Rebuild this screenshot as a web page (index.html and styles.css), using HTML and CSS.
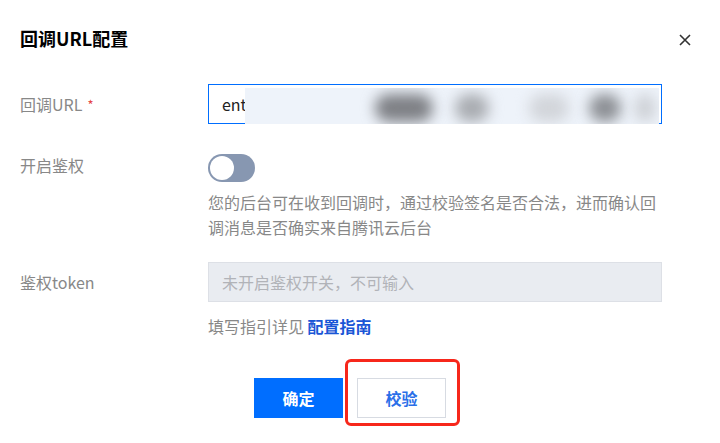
FILE: index.html
```html
<!DOCTYPE html>
<html lang="zh-CN">
<head>
  <meta charset="UTF-8">
  <meta name="viewport" content="width=device-width, initial-scale=1.0">
  <title>回调URL配置</title>
  <link rel="stylesheet" href="styles.css">
</head>
<body>
  <div id="dialog">
    <div class="dialog-head">
      <h3 class="dialog-title">回调URL配置</h3>
      <a class="dialog-close">
        <svg width="12" height="12" viewBox="0 0 12 12">
          <path d="M1 1L11 11M11 1L1 11" stroke="#333" stroke-width="1.6" fill="none"/>
        </svg>
      </a>
    </div>

    <div class="form-row row-url">
      <label class="form-label tall">回调URL<span class="required">*</span></label>
      <div class="form-ctrl">
        <div class="input focus">
          ent
          <!-- 打码区域 -->
          <div class="mask">
            <i class="blob b1"></i>
            <i class="blob b2"></i>
            <i class="blob b3"></i>
            <i class="blob b4"></i>
            <i class="blob b5"></i>
          </div>
        </div>
      </div>
    </div>

    <div class="form-row row-auth">
      <label class="form-label">开启鉴权</label>
      <div class="form-ctrl">
        <span class="switch"><i class="knob"></i></span>
        <p class="desc">您的后台可在收到回调时，通过校验签名是否合法，进而确认回调消息是否确实来自腾讯云后台</p>
      </div>
    </div>

    <div class="form-row row-token">
      <label class="form-label tall">鉴权token</label>
      <div class="form-ctrl">
        <div class="input disabled">未开启鉴权开关，不可输入</div>
        <p class="help">填写指引详见 <a class="link">配置指南</a></p>
      </div>
    </div>

    <div class="dialog-foot">
      <a class="btn btn-primary">确定</a>
      <a class="btn btn-default">校验</a>
    </div>
  </div>
</body>
</html>
```

FILE: styles.css
```css
body {
  margin: 0;
  background: #fff;
  font-family: "Noto Sans CJK SC", "Noto Sans", sans-serif;
  font-size: 16px;
  color: #000;
}
#dialog {
  padding: 0 20px 25px;
}
.dialog-head {
  display: flex;
  justify-content: space-between;
  align-items: center;
  padding-top: 27px;
}
.dialog-title {
  margin: 0;
  font-size: 18px;
  line-height: 22px;
  font-weight: bold;
  color: #000;
}
.dialog-close {
  display: flex;
  margin-right: 9px;
  margin-top: 3px;
}

.form-row {
  display: grid;
  grid-template-columns: 188px 454px;
}
.row-url {
  margin-top: 35px;
}
.row-auth {
  margin-top: 30px;
}
.row-token {
  margin-top: 22px;
}
.form-label {
  color: #888;
  line-height: 22px;
}
.form-label.tall {
  line-height: 40px;
}
.required {
  color: #e54545;
  font-size: 13px;
  margin-left: 5px;
  vertical-align: top;
  position: relative;
  top: 1px;
}

.input {
  position: relative;
  box-sizing: border-box;
  height: 40px;
  line-height: 38px;
  padding: 0 13px;
  border: 1px solid #dcdfe6;
}
.input.focus {
  border-color: #006eff;
  color: #222;
}
.input.disabled {
  background: #e9ecf1;
  border-color: #dde0e6;
  color: #b1b3b8;
}
.mask {
  position: absolute;
  left: 36px;
  top: 3px;
  right: 2px;
  bottom: -1px;
  background: #eef3fa;
  overflow: hidden;
}
.blob {
  position: absolute;
  top: 6px;
  height: 28px;
  border-radius: 14px;
  filter: blur(7px);
}
.b1 { left: 130px; width: 58px; background: #7e8085; }
.b2 { left: 210px; width: 34px; background: #a9acb1; }
.b3 { left: 284px; width: 40px; background: #d2d5da; }
.b4 { left: 344px; width: 32px; background: #8c8f94; }
.b5 { left: 390px; width: 20px; background: #cdd0d5; }

.switch {
  display: block;
  position: relative;
  width: 47px;
  height: 28px;
  border-radius: 14px;
  background: #8797b1;
}
.knob {
  position: absolute;
  left: 2px;
  top: 2px;
  width: 24px;
  height: 24px;
  border-radius: 50%;
  background: #fff;
}
.desc {
  margin: 8px 0 0;
  line-height: 25px;
  color: #888;
}
.help {
  margin: 12px 0 0;
  line-height: 24px;
  color: #888;
}
.link {
  color: #1a56d6;
  font-weight: bold;
}

.dialog-foot {
  display: flex;
  align-items: flex-start;
  gap: 14px;
  margin-top: 40px;
  padding-left: 234px;
}
.btn {
  display: block;
  box-sizing: border-box;
  width: 89px;
  height: 40px;
  line-height: 38px;
  text-align: center;
  font-weight: bold;
  border: 1px solid transparent;
}
.btn-primary {
  background: #006eff;
  border-color: #006eff;
  color: #fff;
}
.btn-default {
  position: relative;
  background: #fff;
  border-color: #d7dbe2;
  color: #2a6fe8;
}
/* 红框标注 */
.btn-default::after {
  content: "";
  position: absolute;
  left: -13px;
  top: -20px;
  right: -15px;
  bottom: -9px;
  border: 3px solid #f7271b;
  border-radius: 6px;
}
```
